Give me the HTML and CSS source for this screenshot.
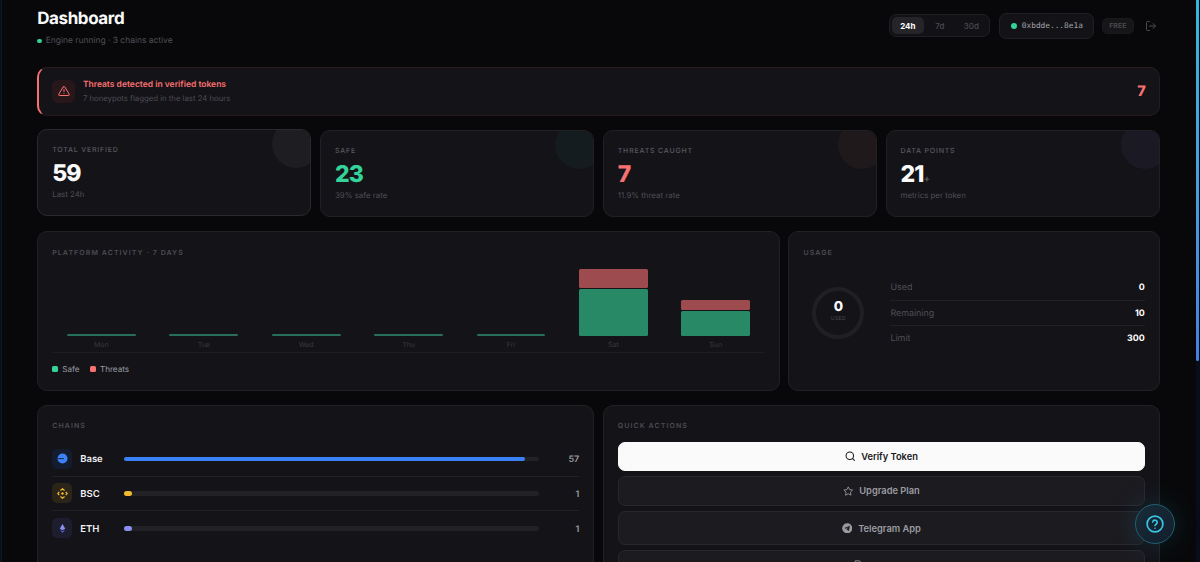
FILE: index.html
```html
<!DOCTYPE html>
<html lang="en">
<head>
<meta charset="utf-8">
<title>Dashboard</title>
<link rel="stylesheet" href="styles.css">
</head>
<body>
<div class="app">
  <main class="main">
    <header class="header">
      <div class="heading">
        <h1 class="title">Dashboard</h1>
        <p class="status"><span class="status-dot"></span>Engine running · 3 chains active</p>
      </div>
      <div class="controls">
        <div class="range">
          <button class="range-item range-active">24h</button>
          <button class="range-item">7d</button>
          <button class="range-item range-month">30d</button>
        </div>
        <div class="wallet"><span class="wallet-dot"></span>0xbdde...8e1a</div>
        <span class="plan">FREE</span>
        <svg class="logout" viewBox="0 0 24 24" fill="none" stroke="currentColor" stroke-width="2" stroke-linecap="round" stroke-linejoin="round"><path d="M9 21H5a2 2 0 0 1-2-2V5a2 2 0 0 1 2-2h4"/><path d="M16 17l5-5-5-5"/><path d="M21 12H9"/></svg>
      </div>
    </header>

    <section class="alert">
      <span class="alert-icon"><svg viewBox="0 0 24 24" fill="none" stroke="currentColor" stroke-width="2" stroke-linecap="round" stroke-linejoin="round"><path d="M10.29 3.86L1.82 18a2 2 0 0 0 1.71 3h16.94a2 2 0 0 0 1.71-3L13.71 3.86a2 2 0 0 0-3.42 0z"/><path d="M12 9v4"/><path d="M12 17h.01"/></svg></span>
      <div class="alert-text">
        <div class="alert-title">Threats detected in verified tokens</div>
        <div class="alert-sub">7 honeypots flagged in the last 24 hours</div>
      </div>
      <span class="alert-count">7</span>
    </section>

    <section class="stats">
      <article class="card stat stat-total">
        <div class="label">TOTAL VERIFIED</div><div class="value">59</div><div class="note">Last 24h</div>
      </article>
      <article class="card stat stat-safe">
        <div class="label">SAFE</div><div class="value">23</div><div class="note">39% safe rate</div>
      </article>
      <article class="card stat stat-threat">
        <div class="label">THREATS CAUGHT</div><div class="value">7</div><div class="note">11.9% threat rate</div>
      </article>
      <article class="card stat stat-data">
        <div class="label">DATA POINTS</div><div class="value">21<span class="plus">+</span></div><div class="note">metrics per token</div>
      </article>
    </section>

    <section class="middle">
      <article class="card panel">
        <h2 class="panel-title">PLATFORM ACTIVITY · 7 DAYS</h2>
        <div class="chart">
          <div class="day"><i class="bar bar-empty"></i><span class="day-name">Mon</span></div>
          <div class="day"><i class="bar bar-empty"></i><span class="day-name">Tue</span></div>
          <div class="day"><i class="bar bar-empty"></i><span class="day-name">Wed</span></div>
          <div class="day"><i class="bar bar-empty"></i><span class="day-name">Thu</span></div>
          <div class="day"><i class="bar bar-empty"></i><span class="day-name">Fri</span></div>
          <div class="day"><i class="bar bar-threat" style="height:19px"></i><i class="bar bar-safe" style="height:47px"></i><span class="day-name">Sat</span></div>
          <div class="day"><i class="bar bar-threat" style="height:9.5px"></i><i class="bar bar-safe" style="height:25.5px"></i><span class="day-name">Sun</span></div>
        </div>
        <div class="legend">
          <span class="legend-item"><i class="swatch swatch-safe"></i>Safe</span>
          <span class="legend-item"><i class="swatch swatch-threat"></i>Threats</span>
        </div>
      </article>
      <article class="card panel">
        <h2 class="panel-title">USAGE</h2>
        <div class="usage">
          <div class="ring"><span class="ring-value">0</span><span class="ring-label">USED</span></div>
          <div class="usage-rows">
            <div class="usage-row"><span>Used</span><b>0</b></div>
            <div class="usage-row"><span>Remaining</span><b>10</b></div>
            <div class="usage-row"><span>Limit</span><b>300</b></div>
          </div>
        </div>
      </article>
    </section>

    <section class="bottom">
      <article class="card panel">
        <h2 class="panel-title">CHAINS</h2>
        <div class="chains">
          <div class="chain">
            <span class="chain-icon base"><svg viewBox="0 0 24 24"><circle cx="12" cy="12" r="11" fill="#3b82f6"/><path d="M1 11h14v2.4H1z" fill="#182e5e"/></svg></span>
            <span class="chain-name">Base</span>
            <span class="track"><i class="fill base-fill" style="width:96.6%"></i></span>
            <span class="chain-count">57</span>
          </div>
          <div class="chain">
            <span class="chain-icon bsc"><svg viewBox="0 0 24 24" fill="none" stroke="#f3ba2f" stroke-width="2.6"><path d="M7.500 5.500L12 1.800l4.500 3.700M7.500 18.500L12 22.200l4.500-3.700M5 8.500L1.800 12 5 15.500M19 8.500l3.200 3.500-3.200 3.500"/><path d="M12 8.500l3.500 3.500-3.500 3.500-3.500-3.500z" fill="#f3ba2f" stroke="none"/></svg></span>
            <span class="chain-name">BSC</span>
            <span class="track"><i class="fill bsc-fill" style="width:2%"></i></span>
            <span class="chain-count">1</span>
          </div>
          <div class="chain">
            <span class="chain-icon eth"><svg viewBox="0 0 24 24"><path d="M12 2l6 10.500-6 3.500-6-3.500z" fill="#8b8df0"/><path d="M6.500 14.500L12 18l5.500-3.500L12 22z" fill="#6366d8"/></svg></span>
            <span class="chain-name">ETH</span>
            <span class="track"><i class="fill eth-fill" style="width:2%"></i></span>
            <span class="chain-count">1</span>
          </div>
        </div>
      </article>
      <article class="card panel">
        <h2 class="panel-title">QUICK ACTIONS</h2>
        <div class="actions">
          <button class="action action-primary"><svg viewBox="0 0 24 24" fill="none" stroke="currentColor" stroke-width="2.4" stroke-linecap="round"><circle cx="11" cy="11" r="8.500"/><path d="M21.500 21.500l-4.500-4.500"/></svg>Verify Token</button>
          <button class="action"><svg viewBox="0 0 24 24" fill="none" stroke="currentColor" stroke-width="2" stroke-linejoin="round"><path d="M12 2l3.090 6.260L22 9.270l-5 4.870 1.180 6.880L12 17.770l-6.180 3.250L7 14.140 2 9.270l6.910-1.010z"/></svg>Upgrade Plan</button>
          <button class="action action-tall"><svg viewBox="0 0 24 24"><circle cx="12" cy="12" r="11.500" fill="currentColor"/><path d="M18 6.500L5 11.700l3.600 1.500 6.400-4-4.900 4.900 5.600 3.900z" fill="#1c1b20"/></svg>Telegram App</button>
          <button class="action action-file"><svg viewBox="0 0 24 24" fill="none" stroke="currentColor" stroke-width="2"><path d="M5 2h10l4 4v16H5z"/></svg></button>
        </div>
      </article>
    </section>
  </main>
  <div class="scrollbar"><div class="thumb"></div></div>
  <button class="help"><svg viewBox="0 0 24 24" fill="none" stroke="currentColor" stroke-width="2.200" stroke-linecap="round" stroke-linejoin="round"><circle cx="12" cy="12" r="10.500"/><path d="M9 9.200a3 3 0 0 1 5.900.9c0 2-2.900 2.500-2.900 4"/><path d="M12 17.600h.01"/></svg></button>
</div>
</body>
</html>
```
FILE: styles.css
```css
* { box-sizing: border-box; }
body {
  margin: 0;
  background: #08080a;
  color: #fafafa;
  font-family: Inter, "Liberation Sans", sans-serif;
  text-rendering: geometricPrecision;
  overflow: hidden;
}
button { font: inherit; color: inherit; border: 0; background: none; padding: 0; }
h1, h2, p { margin: 0; }
svg { display: block; flex: none; }

.app {
  position: relative;
  display: flex;
  height: 562px;
  overflow: hidden;
  border-left: 1px solid #07111b;
}
.app::before { content: ""; width: 1px; background: #0a1929; }
.main { flex: 1; min-width: 0; padding: 0 36.200px 0 35.200px; }

.header { display: flex; justify-content: space-between; height: 67px; }
.title { margin-top: 8px; font-size: 17px; line-height: 22px; font-weight: 700; letter-spacing: -0.400px; }
.status { display: flex; align-items: center; margin-top: 5px; font-size: 8.450px; line-height: 12px; color: #505056; }
.status-dot { width: 4.500px; height: 4.500px; margin-right: 4px; border-radius: 50%; background: #34d399; }
.controls { display: flex; align-items: center; height: 26px; margin-top: 12.500px; }
.range { display: flex; align-items: center; width: 101px; height: 23px; padding: 2px; border: 1px solid #1f1f23; border-radius: 7px; background: #121216; }
.range-item { width: 32px; height: 17px; border-radius: 5px; font-size: 8px; line-height: 16px; font-weight: 500; color: #4a4a50; text-align: center; }
.range-active { background: #252529; color: #fff; font-weight: 700; }
.range-month { width: 31px; }
.wallet { display: flex; align-items: center; width: 95px; height: 26px; margin-left: 9px; padding-left: 11px; border: 1px solid #202024; border-radius: 7px; background: #131317; font: 7.800px "DejaVu Sans Mono", monospace; color: #a1a1a8; }
.wallet-dot { width: 6px; height: 6px; margin-right: 5px; border-radius: 50%; background: #34d399; }
.plan { width: 32px; height: 16px; margin-left: 8px; border: 1px solid #19191b; border-radius: 5px; background: #161618; color: #4c4c52; font-size: 7px; line-height: 14px; font-weight: 600; text-align: center; }
.logout { width: 12px; height: 12px; margin: 0 3px 0 11px; color: #4a4a50; }

.alert {
  display: flex;
  align-items: center;
  height: 49px;
  padding: 0 13px 0 13px;
  border: 1px solid #2b1c20;
  border-right-color: #211f23;
  border-bottom-color: #25191d;
  border-left: 2px solid #f87171;
  border-radius: 10px;
  background: #141318;
}
.alert-icon { display: grid; place-items: center; width: 23px; height: 23px; margin-top: -1px; border-radius: 6px; background: #27171b; color: #f87171; }
.alert-icon svg { width: 12px; height: 12px; }
.alert-text { flex: 1; margin: 0 0 0 7.700px; }
.alert-title { font-size: 8.500px; line-height: 13px; font-weight: 600; color: #f87171; }
.alert-sub { font-size: 7.750px; line-height: 12px; color: #4c4c52; }
.alert-count { margin-top: -1px; font-size: 14.500px; font-weight: 800; color: #f87171; }

.card { border: 1px solid #212125; border-radius: 10px; background: #141318; }
.stats { display: grid; grid-template-columns: repeat(4, 1fr); gap: 8.500px; margin-top: 14px; }
.stat { position: relative; height: 87px; padding: 15px 14px; overflow: hidden; }
.stat::after { content: ""; position: absolute; top: -10px; right: -10px; width: 48px; height: 48px; border-radius: 50%; }
.stat-total { transform: translateY(-1px); border-color: #2a2a2e; }
.stat-total::after { background: #1e1e22; }
.stat-safe::after { background: #151c1f; }
.stat-threat::after { background: #1f191c; }
.stat-data::after { background: #1a1924; }
.label { font-size: 7px; line-height: 10px; font-weight: 500; letter-spacing: 0.800px; color: #5a5a60; }
.value { height: 28px; margin-top: 4px; font-size: 23px; line-height: 28px; font-weight: 800; letter-spacing: -0.900px; }
.stat-safe .value { color: #34d399; }
.stat-threat .value { color: #f87171; }
.plus { font-size: 10px; line-height: 10px; font-weight: 500; color: #65656b; }
.note { margin-top: 1px; font-size: 7.900px; line-height: 12px; color: #505056; }

.middle { display: grid; grid-template-columns: 2fr 1fr; gap: 8.500px; margin-top: 14px; }
.middle .panel { height: 160px; }
.panel { min-width: 0; padding: 15px 14px; }
.panel-title { font-size: 7px; line-height: 11px; font-weight: 600; letter-spacing: 1.080px; color: #4c4c52; }
.chart { display: grid; grid-template-columns: repeat(7, 1fr); column-gap: 4px; height: 95px; border-bottom: 1px solid #1d1d21; }
.day { display: flex; flex-direction: column; justify-content: flex-end; align-items: center; gap: 1px; padding-bottom: 2px; }
.bar { flex: none; width: 70%; border-radius: 1.500px; }
.bar-empty { height: 2px; background: #286f59; }
.bar-safe { background: #288967; }
.bar-threat { background: #9d4b4e; }
.day-name { height: 13px; font-size: 7px; line-height: 16px; color: #3a3a3f; }
.legend { display: flex; gap: 10.500px; margin-top: 10px; }
.legend-item { display: flex; align-items: center; font-size: 8.100px; line-height: 12px; color: #9b9ba2; }
.swatch { width: 6px; height: 6px; margin-right: 4px; border-radius: 1.500px; }
.swatch-safe { background: #34d399; }
.swatch-threat { background: #f87171; }

.usage { display: flex; align-items: center; margin-top: 17px; }
.ring { display: flex; flex-direction: column; align-items: center; width: 52px; height: 52px; margin: 0 26px 0 9px; padding-top: 9px; border: 4px solid #202024; border-radius: 50%; }
.ring-value { font-size: 13.500px; line-height: 14px; font-weight: 800; }
.ring-label { margin-top: 2px; font-size: 5px; line-height: 6px; letter-spacing: 0.500px; color: #4c4c52; }
.usage-rows { flex: 1; }
.usage-row { display: flex; justify-content: space-between; align-items: center; height: 25.500px; padding-top: 0.500px; border-bottom: 1px solid #212125; font-size: 8.900px; color: #505056; }
.usage-row:last-child { border: 0; padding: 0; }
.usage-row b { color: #fff; font-weight: 700; }

.bottom { display: grid; grid-template-columns: 1fr 1fr; gap: 8.500px; margin-top: 14px; }
.bottom .panel { height: 220px; padding-top: 14px; }
.chains { margin-top: 11px; }
.chain { display: flex; align-items: center; height: 34.500px; border-bottom: 1px solid #212125; }
.chain:last-child { border: 0; }
.chain-icon { display: grid; place-items: center; width: 20px; height: 20px; border-radius: 5px; }
.chain-icon svg { width: 11px; height: 11px; }
.base { background: #141c30; }
.bsc { background: #2b2419; }
.eth { background: #1c1e30; }
.chain-name { width: 44px; margin-left: 8px; padding-top: 1.500px; font-size: 9.500px; font-weight: 600; color: #f0f0f2; }
.track { flex: 1; height: 4.500px; border-radius: 3px; background: #222226; }
.fill { display: block; height: 100%; border-radius: 3px; }
.base-fill { background: #3b82f6; }
.bsc-fill { background: #f3ba2f; }
.eth-fill { background: #8b8df0; }
.chain-count { width: 40px; padding-top: 1.500px; text-align: right; font-size: 9px; font-weight: 600; color: #9b9ba2; }

.actions { display: flex; flex-direction: column; gap: 5.300px; margin-top: 11px; }
.action { display: flex; align-items: center; justify-content: center; gap: 6px; flex: none; height: 30px; border: 1px solid #28282c; border-radius: 7px; background: #1c1b20; font-size: 9.300px; font-weight: 600; color: #9b9ba2; }
.action svg { width: 10.500px; height: 10.500px; }
.action-primary { height: 28.500px; border-color: #fafafa; background: #fafafa; color: #18181b; }
.action-tall { height: 34px; }
.action-file { padding-right: 46px; }

.scrollbar { width: 4px; background: #080c1b; }
.thumb { width: 3px; height: 361px; border-radius: 0 0 2px 2px; background: linear-gradient(#38b6dc, #4a9edb 50%, #477fe0); }
.help {
  position: absolute;
  right: 25px;
  bottom: 18px;
  display: grid;
  place-items: center;
  width: 40px;
  height: 40px;
  border: 1px solid #226070;
  border-radius: 50%;
  background: linear-gradient(135deg, #172c38, #141e2d);
  color: #39c6e3;
  box-shadow: 0 0 28px rgba(34, 180, 210, 0.18);
}
.help svg { width: 18px; height: 18px; }
```
